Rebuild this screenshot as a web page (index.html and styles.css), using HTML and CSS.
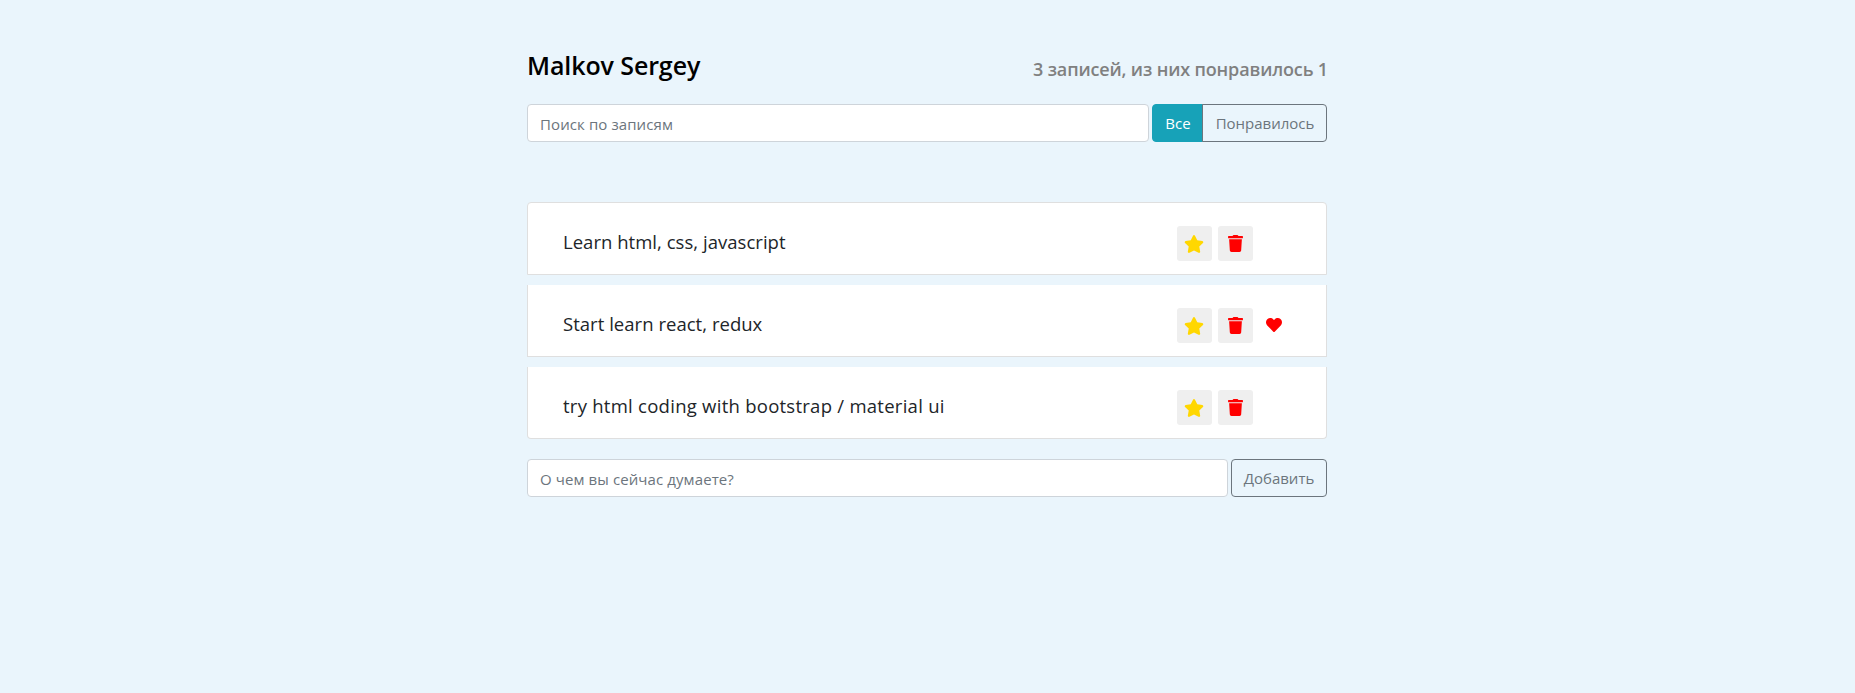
FILE: index.html
```html
<!DOCTYPE html>
<html lang="ru">
<head>
<meta charset="utf-8">
<title>Malkov Sergey</title>
<link rel="stylesheet" href="styles.css">
</head>
<body>
<svg class="sprite" width="0" height="0">
  <symbol id="star" viewBox="0 0 576 512"><path d="M259.300 17.800 194 150.200 47.900 171.500c-26.200 3.800-36.700 36.100-17.700 54.600l105.700 103-25 145.500c-4.500 26.300 23.200 46 46.400 33.700L288 439.600l130.700 68.700c23.200 12.200 50.900-7.400 46.400-33.700l-25-145.500 105.700-103c19-18.500 8.500-50.800-17.700-54.600L382 150.200 316.700 17.800c-11.700-23.600-45.600-23.900-57.400 0z"/></symbol>
  <symbol id="trash" viewBox="0 0 448 512"><path d="M432 32H312l-9.400-18.700A24 24 0 0 0 281.100 0H166.800a23.720 23.720 0 0 0-21.400 13.300L136 32H16A16 16 0 0 0 0 48v32a16 16 0 0 0 16 16h416a16 16 0 0 0 16-16V48a16 16 0 0 0-16-16zM53.200 467a48 48 0 0 0 47.900 45h245.800a48 48 0 0 0 47.900-45L416 128H32z"/></symbol>
  <symbol id="heart" viewBox="0 0 512 512"><path d="M462.300 62.600C407.500 15.900 326 24.300 275.700 76.200L256 96.500l-19.700-20.300C186.100 24.300 104.500 15.900 49.700 62.600c-62.800 53.600-66.100 149.800-9.900 207.900l193.500 199.800c12.500 12.900 32.800 12.900 45.300 0l193.500-199.800c56.300-58.100 53-154.300-9.800-207.900z"/></symbol>
</svg>
<main class="app">
  <header class="header">
    <h1 class="title">Malkov Sergey</h1>
    <h2 class="stats">3 записей, из них понравилось 1</h2>
  </header>
  <div class="bar search">
    <input class="field field-search" type="text" placeholder="Поиск по записям">
    <div class="group">
      <button class="btn active">Все</button>
      <button class="btn liked">Понравилось</button>
    </div>
  </div>
  <ul class="list">
    <li class="item">
      <span class="label">Learn html, css, javascript</span>
      <div class="actions">
        <button class="icon-btn"><svg class="star"><use href="#star"/></svg></button>
        <button class="icon-btn"><svg class="trash"><use href="#trash"/></svg></button>
      </div>
    </li>
    <li class="item">
      <span class="label">Start learn react, redux</span>
      <div class="actions">
        <button class="icon-btn"><svg class="star"><use href="#star"/></svg></button>
        <button class="icon-btn"><svg class="trash"><use href="#trash"/></svg></button>
        <svg class="heart"><use href="#heart"/></svg>
      </div>
    </li>
    <li class="item">
      <span class="label label-long">try html coding with bootstrap / material ui</span>
      <div class="actions">
        <button class="icon-btn"><svg class="star"><use href="#star"/></svg></button>
        <button class="icon-btn"><svg class="trash"><use href="#trash"/></svg></button>
      </div>
    </li>
  </ul>
  <div class="bar">
    <input class="field field-add" type="text" placeholder="О чем вы сейчас думаете?">
    <button class="btn add">Добавить</button>
  </div>
</main>
</body>
</html>
```
FILE: styles.css
```css
* { box-sizing: border-box; }
body { margin: 0; background: #eaf5fc; font-family: "Open Sans", "Noto Sans", sans-serif; color: #212529; }
.sprite { display: block; }
.app { width: 800px; margin: 0 0 0 527px; padding-top: 47px; }
.header { display: flex; justify-content: space-between; height: 57px; color: #000; white-space: nowrap; }
.title { margin: 0; font-size: 25px; line-height: 36px; font-weight: 600; letter-spacing: -0.1px; }
.stats { margin: 0 -1px 0 0; padding-top: 9px; font-size: 18px; line-height: 27px; font-weight: 600; letter-spacing: -0.15px; color: #808080; }
.bar { display: flex; gap: 3px; height: 38px; }
.field { flex: 1; min-width: 0; height: 38px; border: 1px solid #ced4da; border-radius: 4px; background: #fff; padding: 4px 12px 2px; font: 15px "Open Sans", sans-serif; letter-spacing: 0.1px; color: #495057; outline: 0; }
.field::placeholder { color: #6c757d; opacity: 1; }
.group { display: flex; width: 175px; }
.btn { height: 38px; padding: 0; border: 1px solid #6c757d; border-radius: 4px; background: transparent; color: #6c757d; font: 15px "Open Sans", sans-serif; white-space: nowrap; }
.active { width: 51px; padding-left: 1px; background: #17a2b8; border-color: #17a2b8; color: #fff; border-radius: 4px 0 0 4px; }
.liked { width: 125px; margin-left: -1px; padding-left: 1px; border-radius: 0 4px 4px 0; }
.add { width: 96px; }
.list { list-style: none; margin: 60px 0 20px; padding: 0; display: flex; flex-direction: column; gap: 10px; }
.item { display: flex; justify-content: space-between; height: 72px; padding: 23px 36px 0 35px; border: 1px solid #dfdfdf; border-top: 0; background: #fff; }
.item:first-child { height: 73px; border-top: 1px solid #dfdfdf; border-radius: 4px 4px 0 0; }
.item:last-child { border-radius: 0 0 4px 4px; }
.label { font-size: 18.500px; line-height: 32px; letter-spacing: 0.03px; white-space: nowrap; }
.label-long { letter-spacing: 0.26px; }
.actions { display: flex; gap: 6px; width: 113px; }
.icon-btn { width: 35px; height: 35px; padding: 0; border: 0; border-radius: 3px; background: #efefef; display: flex; align-items: center; justify-content: center; }
.star { width: 20px; height: 18px; margin-right: 1px; fill: #ffd700; }
.trash { width: 15px; height: 17px; fill: #f00; }
.heart { width: 16px; height: 16px; margin: 9px 0 0 6.500px; fill: #f00; }
```
